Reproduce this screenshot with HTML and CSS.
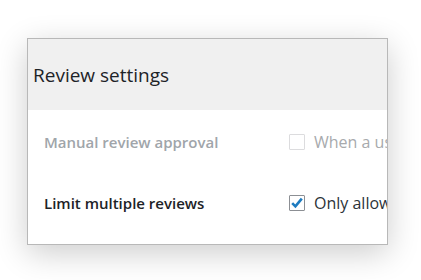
FILE: index.html
```html
<!DOCTYPE html>
<html lang="en">
<head>
    <meta charset="UTF-8">
    <title>Review settings</title>
    <link rel="stylesheet" href="styles.css">
</head>
<body>
    <div class="card">
        <div class="card-head">
            <h2>Review settings</h2>
        </div>
        <div class="card-body">
            <div class="row disabled">
                <div class="label">Manual review approval</div>
                <label class="field">
                    <span class="box"></span>
                    <span class="text">When a user submits a review, it must be approved</span>
                </label>
            </div>
            <div class="row">
                <div class="label">Limit multiple reviews</div>
                <label class="field">
                    <span class="box checked">
                        <svg width="14" height="14" viewBox="0 0 14 14"><path d="M2.2 7.2 L5.4 10.4 L11.8 2.6" fill="none" stroke="#1e7cc0" stroke-width="2.6"/></svg>
                    </span>
                    <span class="text">Only allow one review per customer</span>
                </label>
            </div>
        </div>
    </div>
</body>
</html>
```

FILE: styles.css
```css
html, body { margin: 0; background: #fff; font-family: "Open Sans", Arial, sans-serif; }
body { padding: 38px 0 35px 27px; overflow: hidden; }
.card { width: 359px; height: 205px; border: 1px solid #b8b8b8; background: #fff; overflow: hidden; box-shadow: 0 8px 30px rgba(0, 0, 0, 0.2); }
.card-head { height: 71px; background: #f0f0f0; display: flex; align-items: center; padding-left: 5px; }
.card-head h2 { margin: 0; font-size: 19px; font-weight: 400; color: #1d2327; }
.card-body { padding: 20px 0 0 16px; }
.row { display: flex; align-items: center; height: 24px; margin-bottom: 37px; white-space: nowrap; }
.label { width: 245px; flex: none; font-size: 15px; font-weight: 600; color: #1d2327; }
.field { display: flex; align-items: center; gap: 9px; font-size: 16px; color: #2c3338; }
.box { width: 14px; height: 14px; border: 1px solid #8c8f94; border-radius: 1px; display: flex; align-items: center; justify-content: center; flex: none; }
.disabled .label { color: #a0a5aa; }
.disabled .text { color: #a7aaad; }
.disabled .box { border-color: #dcdcde; }
```
